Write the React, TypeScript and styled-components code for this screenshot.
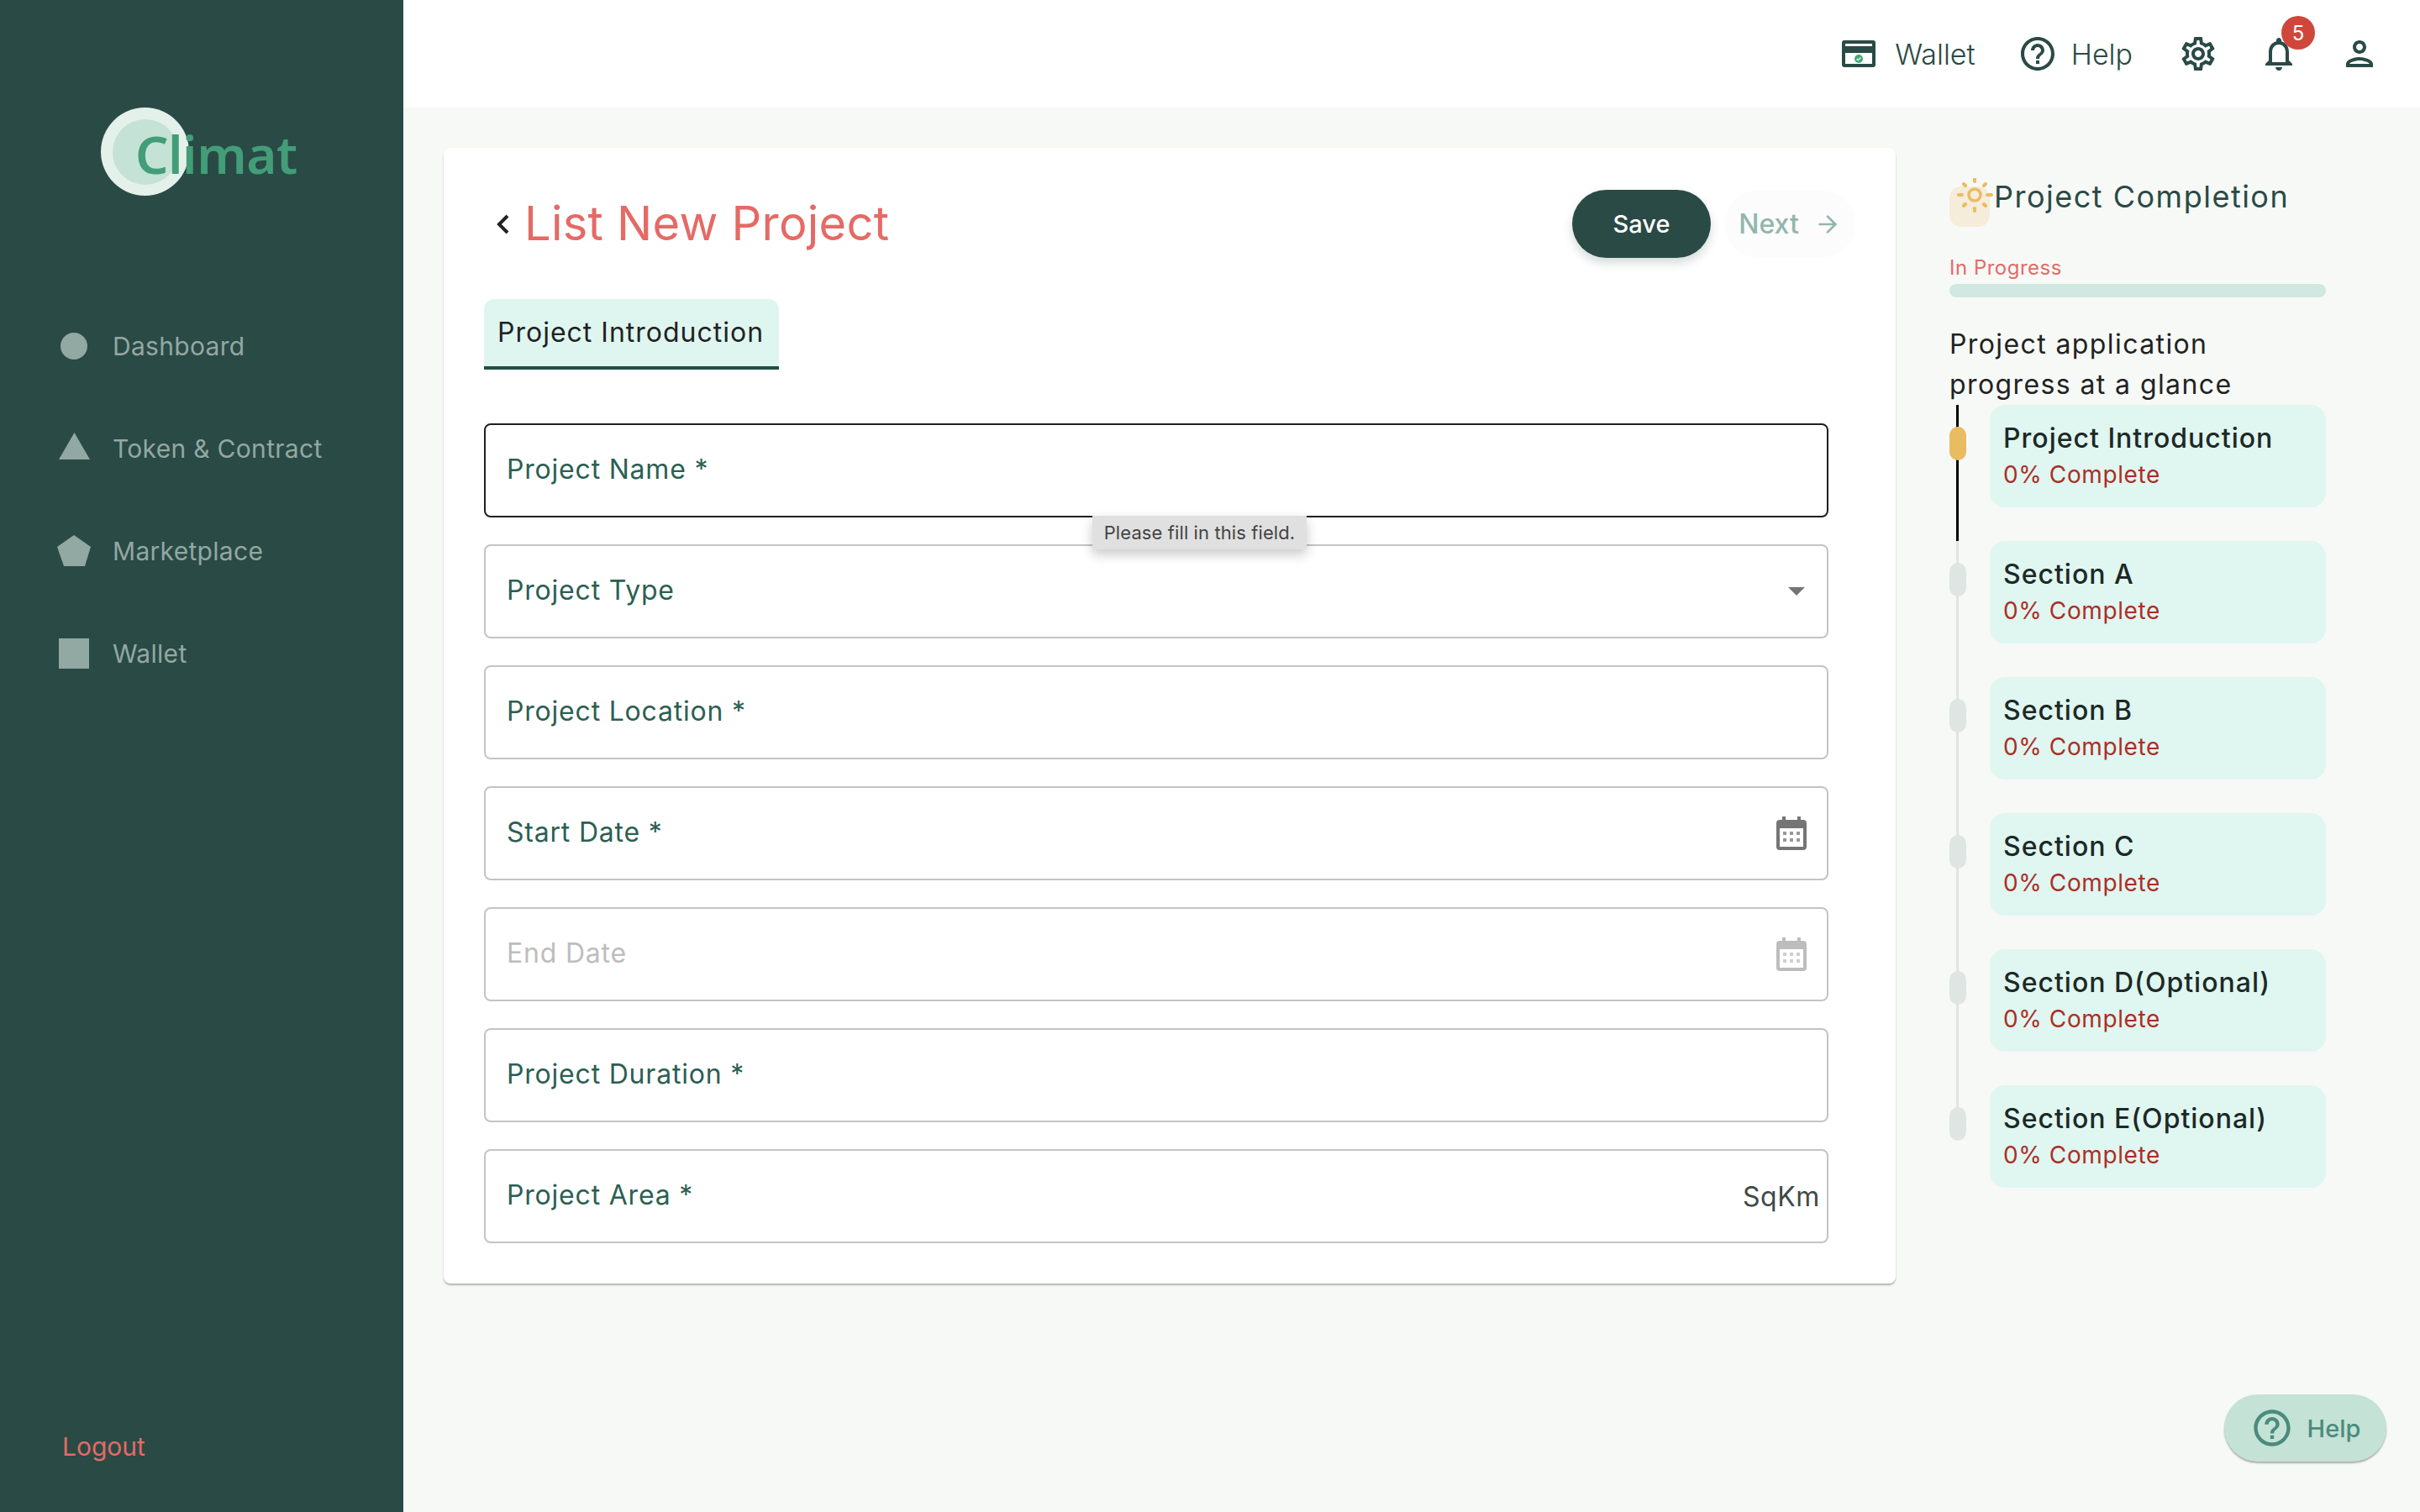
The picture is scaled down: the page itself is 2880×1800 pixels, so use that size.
import styled, { createGlobalStyle } from 'styled-components'
import { ArrowRight } from 'lucide-react'
import {
  MdOutlineHelpOutline,
  MdOutlineSettings,
  MdOutlineNotifications,
  MdOutlinePerson,
} from 'react-icons/md'

const GlobalStyle = createGlobalStyle`
  html, body { margin: 0; padding: 0; }
  body {
    background: #f7f9f7;
    font-family: Inter, "Open Sans", sans-serif;
  }
  * { box-sizing: border-box; }
`

const Page = styled.div`
  display: flex;
  width: 2880px;
  height: 1800px;
  overflow: hidden;
  background: #f7f9f7;
  position: relative;
`

const Sidebar = styled.aside`
  width: 480px;
  flex-shrink: 0;
  background: #2a4a45;
  display: flex;
  flex-direction: column;
  padding: 128px 0 0 0;
`

const Logo = styled.div`
  position: relative;
  margin-left: 120px;
  width: 240px;
  height: 105px;
  margin-bottom: 159px;
`

const LogoRing = styled.div`
  width: 105px;
  height: 105px;
  border-radius: 50%;
  background: #e4f0ea;
  display: flex;
  align-items: center;
  justify-content: center;

  &::after {
    content: '';
    width: 78px;
    height: 78px;
    border-radius: 50%;
    background: #c4e2d5;
  }
`

const LogoText = styled.span`
  position: absolute;
  left: 41px;
  top: 12px;
  font-family: "Noto Sans", sans-serif;
  font-weight: 600;
  font-size: 62px;
  line-height: 86px;
  letter-spacing: -0.5px;
  color: #429d78;
`

const Nav = styled.nav`
  display: flex;
  flex-direction: column;
  gap: 82px;
  padding-left: 68px;
`

const NavItem = styled.div`
  display: flex;
  align-items: center;
  gap: 26px;
  height: 40px;
  font-size: 30px;
  font-weight: 400;
  letter-spacing: 0.3px;
  color: #92a8a3;

  svg {
    width: 40px;
    height: 40px;
    fill: #92a8a3;
    flex-shrink: 0;
  }
`

const Logout = styled.div`
  margin-top: auto;
  margin-bottom: 60px;
  padding-left: 74px;
  font-size: 30px;
  color: #e46a66;
`

const Main = styled.main`
  flex: 1;
  display: flex;
  flex-direction: column;
  min-width: 0;
`

const Topbar = styled.header`
  height: 128px;
  background: #fff;
  display: flex;
  align-items: center;
  justify-content: flex-end;
  padding: 0 48px 0 0;
  color: #2a4a45;
`

const TopLink = styled.div<{ $gap?: number; $space?: number }>`
  display: flex;
  align-items: center;
  gap: ${(p) => p.$space ?? 16}px;
  margin-right: ${(p) => p.$gap ?? 48}px;
  font-size: 34px;
  font-weight: 350;
`

const TopIcon = styled.div<{ $gap?: number }>`
  position: relative;
  display: flex;
  width: 48px;
  height: 48px;
  margin-right: ${(p) => p.$gap ?? 0}px;
`

const Badge = styled.span`
  position: absolute;
  left: 27px;
  top: -21px;
  width: 40px;
  height: 40px;
  border-radius: 50%;
  background: #cf473a;
  color: #fff;
  font-size: 24px;
  display: flex;
  align-items: center;
  justify-content: center;
`

const Content = styled.div`
  display: flex;
  align-items: flex-start;
  gap: 64px;
  padding: 48px 0 0 48px;
`

const Card = styled.section`
  width: 1728px;
  background: #fff;
  border-radius: 8px;
  box-shadow: 0 2px 2px rgba(0, 0, 0, 0.28);
  padding: 50px 80px 48px 48px;
`

const CardHead = styled.div`
  display: flex;
  align-items: center;
  height: 81px;
  margin-bottom: 49px;
`

const BackIcon = styled.svg`
  width: 16px;
  height: 24px;
  margin-left: 15px;
  margin-right: 17px;
  flex-shrink: 0;
`

const Title = styled.h1`
  margin: 0 0 2px;
  flex: 1;
  font-size: 56px;
  font-weight: 400;
  letter-spacing: 0.25px;
  color: #e46a66;
`

const SaveButton = styled.button`
  width: 165px;
  height: 81px;
  border: none;
  border-radius: 41px;
  background: #2a4a45;
  color: #fff;
  font-family: inherit;
  font-size: 29px;
  font-weight: 500;
  box-shadow: 0 6px 12px rgba(42, 74, 69, 0.2);
`

const NextButton = styled.button`
  width: 156px;
  height: 81px;
  margin-left: 16px;
  margin-right: -32px;
  border: none;
  border-radius: 41px;
  background: #fbfcfb;
  color: #93b5ae;
  font-family: inherit;
  font-size: 32px;
  font-weight: 500;
  display: flex;
  align-items: center;
  justify-content: center;
  gap: 18px;
`

const Tab = styled.div`
  width: 351px;
  height: 84px;
  padding: 0 0 2px 16px;
  display: flex;
  align-items: center;
  background: #dff6f0;
  border-bottom: 4px solid #1f4f46;
  border-radius: 12px 12px 0 0;
  font-size: 32px;
  letter-spacing: 1px;
  color: #222;
  margin-bottom: 64px;
`

const Form = styled.form`
  display: flex;
  flex-direction: column;
  gap: 32px;
`

const Field = styled.div<{ $focused?: boolean }>`
  position: relative;
  display: flex;
  align-items: center;
  width: 1600px;
  height: 112px;
  padding: 0 8px 0 25px;
  border: 2px solid ${(p) => (p.$focused ? '#1f1f1f' : '#c4c4c4')};
  border-radius: 8px;
  background: #fff;
`

const FieldInput = styled.input`
  flex: 1;
  min-width: 0;
  border: none;
  outline: none;
  background: transparent;
  padding: 0 0 3px;
  font-family: inherit;
  font-size: 32px;
  letter-spacing: 0.8px;

  &::placeholder {
    color: #2c5f53;
    opacity: 1;
  }

  &:disabled::placeholder {
    color: #bdbdbd;
  }
`

const Caret = styled.span`
  width: 0;
  height: 0;
  margin-right: 18px;
  border-left: 10px solid transparent;
  border-right: 10px solid transparent;
  border-top: 10px solid #757575;
`

const CalendarIcon = styled.svg<{ $muted?: boolean }>`
  width: 36px;
  height: 40px;
  margin-right: 16px;
  fill: ${(p) => (p.$muted ? '#bdbdbd' : '#757575')};
`

const Unit = styled.span`
  font-size: 32px;
  letter-spacing: 0.6px;
  color: #3f4a47;
`

const Tooltip = styled.div`
  position: absolute;
  z-index: 2;
  left: 722px;
  top: 108px;
  width: 255px;
  height: 40px;
  display: flex;
  align-items: center;
  justify-content: center;
  background: #e0e0e0;
  border-radius: 0 0 4px 4px;
  box-shadow: 0 6px 14px rgba(0, 0, 0, 0.22);
  font-size: 22px;
  letter-spacing: 0.1px;
  color: #444;
`

const Panel = styled.aside`
  width: 448px;
  padding-top: 46px;
`

const PanelHead = styled.div`
  display: flex;
  align-items: flex-start;
  height: 60px;
  margin-bottom: 22px;
`

const SunIcon = styled.svg`
  width: 53px;
  height: 60px;
  margin-top: -10px;
  flex-shrink: 0;
`

const PanelTitle = styled.h2`
  margin: -10px 0 0;
  font-size: 36px;
  line-height: 44px;
  font-weight: 400;
  white-space: nowrap;
  letter-spacing: 1.5px;
  color: #2a4a45;
`

const StatusLabel = styled.div`
  font-size: 24px;
  line-height: 30px;
  letter-spacing: 0.5px;
  color: #e46a66;
  margin-bottom: 4px;
`

const ProgressTrack = styled.div`
  height: 16px;
  border-radius: 8px;
  background: #d1e7e1;
  margin-bottom: 32px;
`

const PanelText = styled.p`
  margin: 0;
  max-width: 400px;
  font-size: 32px;
  line-height: 48px;
  letter-spacing: 1.4px;
  color: #222;
`

const StepList = styled.div`
  display: flex;
  flex-direction: column;
`

const Step = styled.div`
  display: flex;
  padding-bottom: 40px;

  &:last-child {
    padding-bottom: 0;
  }
`

const Rail = styled.div<{ $active?: boolean; $last?: boolean }>`
  position: relative;
  width: 48px;
  flex-shrink: 0;

  &::before {
    content: '';
    position: absolute;
    left: 8px;
    top: 0;
    height: ${(p) => (p.$last ? '30px' : '162px')};
    width: 3px;
    background: ${(p) => (p.$active ? '#000' : '#dfe5e2')};
  }
`

const StepDot = styled.span<{ $active?: boolean }>`
  position: absolute;
  left: 0;
  top: 26px;
  width: 20px;
  height: 40px;
  border-radius: 10px;
  background: ${(p) => (p.$active ? '#e9bc62' : '#dfe5e2')};
`

const StepCard = styled.div`
  flex: 1;
  height: 122px;
  padding: 18px 16px 0;
  border-radius: 18px;
  background: #e0f6f0;
`

const StepTitle = styled.div`
  font-size: 32px;
  line-height: 44px;
  font-weight: 500;
  letter-spacing: 1px;
  white-space: nowrap;
  color: #1c2926;
`

const StepStatus = styled.div`
  font-size: 28px;
  line-height: 42px;
  letter-spacing: 0.6px;
  color: #ab2e27;
`

const HelpFab = styled.button`
  position: absolute;
  left: 2647px;
  top: 1660px;
  width: 193px;
  height: 80px;
  border: none;
  border-radius: 40px;
  background: #c4e2d5;
  color: #4b8b7d;
  font-family: inherit;
  font-size: 29px;
  font-weight: 500;
  display: flex;
  align-items: center;
  justify-content: center;
  gap: 16px;
  box-shadow: 0 2px 2px rgba(0, 0, 0, 0.3);
`

const steps = ['Project Introduction', 'Section A', 'Section B', 'Section C', 'Section D(Optional)', 'Section E(Optional)']

const Calendar = ({ muted }: { muted?: boolean }) => (
  <CalendarIcon $muted={muted} viewBox="0 0 36 40">
    <path d="M7 0h4v4h14V0h4v4h3a4 4 0 0 1 4 4v28a4 4 0 0 1-4 4H4a4 4 0 0 1-4-4V8a4 4 0 0 1 4-4h3zM4 14v22h28V14z" />
    <path d="M8 18h4v4H8zM16 18h4v4h-4zM24 18h4v4h-4zM8 26h4v4H8zM16 26h4v4h-4zM24 26h4v4h-4z" opacity="0.75" />
  </CalendarIcon>
)

const App = () => {
  return (
    <Page>
      <GlobalStyle />
      <Sidebar>
        <Logo>
          <LogoRing />
          <LogoText>Climat</LogoText>
        </Logo>
        <Nav>
          <NavItem>
            <svg viewBox="0 0 40 40"><circle cx="20" cy="20" r="16" /></svg>
            Dashboard
          </NavItem>
          <NavItem>
            <svg viewBox="0 0 40 40"><path d="M20.5 1L39 33H2z" /></svg>
            Token &amp; Contract
          </NavItem>
          <NavItem>
            <svg viewBox="0 0 40 40"><path d="M20 1l20 14-7 23H8L0 15z" /></svg>
            Marketplace
          </NavItem>
          <NavItem>
            <svg viewBox="0 0 40 40"><path d="M2 2h36v36H2z" /></svg>
            Wallet
          </NavItem>
        </Nav>
        <Logout>Logout</Logout>
      </Sidebar>

      <Main>
        <Topbar>
          <TopLink $gap={50} $space={23}>
            <svg width="40" height="32" viewBox="0 0 40 32">
              <rect width="40" height="32" rx="3" fill="#2a4a45" />
              <rect x="4" y="4" width="32" height="3" fill="#fff" />
              <rect x="4" y="15" width="32" height="13" fill="#fff" />
              <circle cx="20" cy="22" r="5" fill="#46a877" />
              <path d="M17.6 22l1.7 1.7 3-3" stroke="#fff" strokeWidth="1.2" fill="none" />
            </svg>
            Wallet
          </TopLink>
          <TopLink $gap={54}>
            <MdOutlineHelpOutline size={48} />
            Help
          </TopLink>
          <TopIcon $gap={48}><MdOutlineSettings size={48} /></TopIcon>
          <TopIcon $gap={48}>
            <MdOutlineNotifications size={48} />
            <Badge>5</Badge>
          </TopIcon>
          <TopIcon><MdOutlinePerson size={48} /></TopIcon>
        </Topbar>

        <Content>
          <Card>
            <CardHead>
              <BackIcon viewBox="0 0 16 24">
                <path d="M13 2L3 12l10 10" stroke="#222" strokeWidth="4" fill="none" />
              </BackIcon>
              <Title>List New Project</Title>
              <SaveButton type="button">Save</SaveButton>
              <NextButton type="button">
                Next
                <ArrowRight size={32} />
              </NextButton>
            </CardHead>

            <Tab>Project Introduction</Tab>

            <Form>
              <Field $focused>
                <FieldInput placeholder="Project Name *" />
                <Tooltip>Please fill in this field.</Tooltip>
              </Field>
              <Field>
                <FieldInput placeholder="Project Type" />
                <Caret />
              </Field>
              <Field>
                <FieldInput placeholder="Project Location *" />
              </Field>
              <Field>
                <FieldInput placeholder="Start Date *" />
                <Calendar />
              </Field>
              <Field>
                <FieldInput placeholder="End Date" disabled />
                <Calendar muted />
              </Field>
              <Field>
                <FieldInput placeholder="Project Duration *" />
              </Field>
              <Field>
                <FieldInput placeholder="Project Area *" />
                <Unit>SqKm</Unit>
              </Field>
            </Form>
          </Card>

          <Panel>
            <PanelHead>
              <SunIcon viewBox="0 0 53 60">
                <rect x="0" y="10" width="48" height="48" rx="14" fill="#f5ecd9" />
                <g stroke="#e9bc62" strokeWidth="4" strokeLinecap="round" fill="none">
                  <circle cx="30" cy="20" r="7" strokeWidth="3.5" />
                  <path d="M30 1v3M30 36v3M11 20h4M45 20h5M17 7l2 2M41 31l2 2M43 7l-2 2M19 31l-2 2" />
                </g>
              </SunIcon>
              <PanelTitle>Project Completion</PanelTitle>
            </PanelHead>
            <StatusLabel>In Progress</StatusLabel>
            <ProgressTrack />
            <PanelText>Project application progress at a glance</PanelText>
            <StepList>
              {steps.map((s, i) => (
                <Step key={s}>
                  <Rail $active={i === 0} $last={i === steps.length - 1}>
                    <StepDot $active={i === 0} />
                  </Rail>
                  <StepCard>
                    <StepTitle>{s}</StepTitle>
                    <StepStatus>0% Complete</StepStatus>
                  </StepCard>
                </Step>
              ))}
            </StepList>
          </Panel>
        </Content>
      </Main>

      <HelpFab type="button">
        <MdOutlineHelpOutline size={52} />
        Help
      </HelpFab>
    </Page>
  )
}

export default App
